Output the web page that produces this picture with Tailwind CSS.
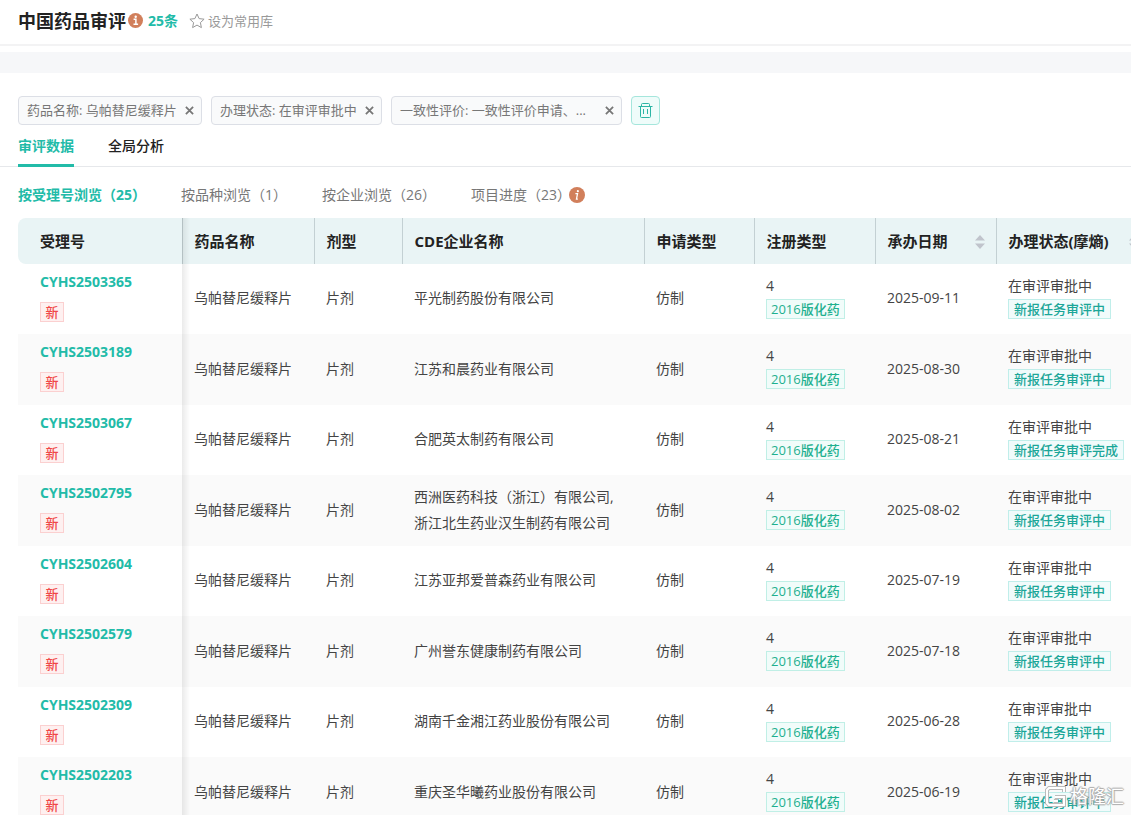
<!DOCTYPE html>
<html lang="zh-CN">
<head>
    <meta charset="UTF-8">
    <meta name="viewport" content="width=device-width, initial-scale=1.0">
    <title>中国药品审评</title>
    <script src="https://cdn.jsdelivr.net/npm/@tailwindcss/browser@4"></script>
</head>
<body class="h-screen overflow-hidden bg-white font-['Open_Sans','Noto_Sans_CJK_SC',sans-serif] text-sm text-[#444]">

    <!-- 页头 -->
    <header class="flex h-[46px] items-center border-b-2 border-[#f3f3f4] px-[18px] pb-0.5">
        <h1 class="text-lg font-bold text-[#222]">中国药品审评</h1>
        <svg class="mb-0.5 ml-0.5 size-[15px]" viewBox="0 0 15 15">
            <circle cx="7.5" cy="7.5" r="7.5" fill="#d17f5b"/>
            <path d="M5.6 6.3h2.300v5M5.500 11.300h4.600" fill="none" stroke="#fff" stroke-width="1.5"/>
            <circle cx="7.700" cy="3.700" r="1.200" fill="#fff"/>
        </svg>
        <span class="ml-[5px] text-sm font-bold text-[#22bba8]">25条</span>
        <button class="ml-[11px] flex items-center gap-[3px] text-[13px] text-[#999]">
            <svg class="size-4" viewBox="0 0 16 16" fill="none" stroke="#999" stroke-linejoin="round">
                <path d="M8 1l2.1 4.6 5 .6-3.7 3.4 1 5L8 12.100l-4.400 2.500 1-5L.9 6.200l5-.6z"/>
            </svg>
            设为常用库
        </button>
    </header>
    <div class="mt-1.5 h-[21px] bg-[#f6f7f9]"></div>

    <!-- 筛选条件 -->
    <div class="mt-[23px] flex gap-[9px] px-[18px] text-[13px] text-[#777]">
        <div class="flex h-[29px] w-[184px] items-center justify-between rounded border border-[#dcdfe6] bg-[#f9fafb] pr-[7px] pl-2 whitespace-nowrap">
            <span>药品名称: 乌帕替尼缓释片</span>
            <button aria-label="移除药品名称"><svg class="size-[9px]" viewBox="0 0 10 10" stroke="#777" stroke-width="2"><path d="M1 1l8 8M9 1l-8 8"/></svg></button>
        </div>
        <div class="flex h-[29px] w-[171px] items-center justify-between rounded border border-[#dcdfe6] bg-[#f9fafb] pr-[7px] pl-2 whitespace-nowrap">
            <span>办理状态: 在审评审批中</span>
            <button aria-label="移除办理状态"><svg class="size-[9px]" viewBox="0 0 10 10" stroke="#777" stroke-width="2"><path d="M1 1l8 8M9 1l-8 8"/></svg></button>
        </div>
        <div class="flex h-[29px] w-[231px] items-center justify-between rounded border border-[#dcdfe6] bg-[#f9fafb] pr-[7px] pl-2 whitespace-nowrap">
            <span>一致性评价: 一致性评价申请、...</span>
            <button aria-label="移除一致性评价"><svg class="size-[9px]" viewBox="0 0 10 10" stroke="#777" stroke-width="2"><path d="M1 1l8 8M9 1l-8 8"/></svg></button>
        </div>
        <button aria-label="清空" class="flex size-[29px] items-center justify-center rounded border border-[#a5e6dc] bg-[#effcfa]">
            <svg class="size-[15px]" viewBox="0 0 15 15" fill="none" stroke="#2cb5a5">
                <path d="M.5 3.500h14M3.500 3.500v-2q0-1 1-1h6q1 0 1 1v2M2.500 3.500v10q0 1 1 1h8q1 0 1-1v-10M5.500 6v5M9.500 6v5"/>
            </svg>
        </button>
    </div>

    <!-- 一级标签 -->
    <nav class="flex h-[42px] gap-[34px] border-b border-[#e6e8eb] px-[18px] leading-[42px] text-[#222]">
        <a href="#" class="h-[42px] border-b-3 border-[#22bba8] font-bold text-[#22bba8]">审评数据</a>
        <a href="#" class="font-medium">全局分析</a>
    </nav>

    <!-- 二级标签 -->
    <nav class="flex h-[51px] items-center gap-[35px] px-[18px] pt-1 text-[#777] whitespace-nowrap">
        <a href="#" class="font-bold text-[#22bba8]">按受理号浏览（25）</a>
        <a href="#">按品种浏览（1）</a>
        <a href="#">按企业浏览（26）</a>
        <a href="#" class="flex items-center">项目进度（23）
            <svg class="-ml-0.5 size-4" viewBox="0 0 15 15">
                <circle cx="7.5" cy="7.5" r="7.5" fill="#d17f5b"/>
                <path d="M6 6.300h2l-1 5h1.300" fill="none" stroke="#fff" stroke-width="1.200"/>
                <circle cx="8.300" cy="3.900" r="1" fill="#fff"/>
            </svg>
        </a>
    </nav>

    <!-- 数据表格 -->
    <div class="relative overflow-hidden pl-[18px]">
        <table class="w-[1140px] table-fixed text-left">
            <colgroup>
                <col class="w-[164px]"><col class="w-[132px]"><col class="w-[88px]"><col class="w-[242px]">
                <col class="w-[110px]"><col class="w-[121px]"><col class="w-[121px]"><col>
            </colgroup>
            <thead class="bg-[#e9f4f5] text-[15px] whitespace-nowrap text-[#222]">
                <tr class="h-[46px]">
                    <th class="rounded-l-lg pt-0.5 pl-[22px]">受理号</th>
                    <th class="border-l border-[#c3d0d3] pt-0.5 pl-3">药品名称</th>
                    <th class="border-l border-[#c3d0d3] pt-0.5 pl-3">剂型</th>
                    <th class="border-l border-[#c3d0d3] pt-0.5 pl-3">CDE企业名称</th>
                    <th class="border-l border-[#c3d0d3] pt-0.5 pl-3">申请类型</th>
                    <th class="border-l border-[#c3d0d3] pt-0.5 pl-3">注册类型</th>
                    <th class="border-l border-[#c3d0d3] pt-0.5 pl-3">
                        <div class="flex items-center justify-between pr-[11px]">承办日期
                            <svg class="h-4 w-2.5" viewBox="0 0 10 16" fill="#c0c4cc"><path d="M5 1l5 5.500H0zM5 15l5-5.500H0z"/></svg>
                        </div>
                    </th>
                    <th class="border-l border-[#c3d0d3] pt-0.5 pl-3">
                        <div class="flex items-center justify-between pr-[19px]">办理状态(摩熵)
                            <svg class="h-4 w-2.5" viewBox="0 0 10 16" fill="#c0c4cc"><path d="M5 1l5 5.500H0zM5 15l5-5.500H0z"/></svg>
                        </div>
                    </th>
                </tr>
            </thead>
            <tbody id="rows" class="leading-[26px]"></tbody>
        </table>
        <!-- 固定列阴影 -->
        <div class="pointer-events-none absolute inset-y-0 left-[182px] w-2 bg-linear-to-r from-black/8 to-transparent"></div>
    </div>

    <!-- 水印 -->
    <div class="pointer-events-none absolute right-[7px] bottom-[7px] flex items-center gap-[3px] text-lg leading-6 text-white [text-shadow:1px_0_1px_#aaa,-1px_0_1px_#aaa,0_1px_1px_#aaa,0_-1px_1px_#aaa]">
        <svg class="size-[23px]" viewBox="0 0 23 23" fill="none">
            <path d="M20 7V3H5L3 5v13l2 2h15v-8h-9M14 16h-4" stroke="#bbb" stroke-width="4"/>
            <path d="M20 7V3H5L3 5v13l2 2h15v-8h-9M14 16h-4" stroke="#fff" stroke-width="2"/>
        </svg>
        格隆汇
    </div>

    <template id="row-template">
        <tr class="odd:h-[70px] even:h-[71px] even:bg-[#fafafa]">
            <td class="pt-1.5 pl-[22px] align-top">
                <a href="#" data-field="code" class="block leading-6 font-bold text-[#22bba8]"></a>
                <span class="mt-2 block h-5 w-6 border border-[#fbd0d0] bg-[#fef0f0] text-center text-[13px] leading-[18px] font-medium text-[#f04747]">新</span>
            </td>
            <td class="pb-0.5 pl-3">乌帕替尼缓释片</td>
            <td class="pb-0.5 pl-3">片剂</td>
            <td data-field="company" class="pb-0.5 pl-3 whitespace-pre-line"></td>
            <td class="pb-0.5 pl-3">仿制</td>
            <td class="pt-[9px] pl-3 align-top">
                <div>4</div>
                <span class="block h-5 w-fit border border-[#c0efe6] bg-[#f1fcfa] px-1 text-[13px] leading-[18px] font-medium text-[#1fb08f]">2016版化药</span>
            </td>
            <td data-field="date" class="pb-0.5 pl-3"></td>
            <td class="pt-[9px] pl-3 align-top whitespace-nowrap">
                <div>在审评审批中</div>
                <span data-field="status" class="block h-5 w-fit border border-[#c0eeea] bg-[#f1fbfb] px-[5px] text-[13px] leading-[18px] font-medium text-[#1ba698]"></span>
            </td>
        </tr>
    </template>

    <script>
        const records = [
            { code: 'CYHS2503365', company: '平光制药股份有限公司', date: '2025-09-11', status: '新报任务审评中' },
            { code: 'CYHS2503189', company: '江苏和晨药业有限公司', date: '2025-08-30', status: '新报任务审评中' },
            { code: 'CYHS2503067', company: '合肥英太制药有限公司', date: '2025-08-21', status: '新报任务审评完成' },
            { code: 'CYHS2502795', company: '西洲医药科技（浙江）有限公司,\n浙江北生药业汉生制药有限公司', date: '2025-08-02', status: '新报任务审评中' },
            { code: 'CYHS2502604', company: '江苏亚邦爱普森药业有限公司', date: '2025-07-19', status: '新报任务审评中' },
            { code: 'CYHS2502579', company: '广州誉东健康制药有限公司', date: '2025-07-18', status: '新报任务审评中' },
            { code: 'CYHS2502309', company: '湖南千金湘江药业股份有限公司', date: '2025-06-28', status: '新报任务审评中' },
            { code: 'CYHS2502203', company: '重庆圣华曦药业股份有限公司', date: '2025-06-19', status: '新报任务审评中' }
        ];

        const tbody = document.getElementById('rows');
        const template = document.getElementById('row-template');

        // 逐行填充表格
        records.forEach(record => {
            const row = template.content.cloneNode(true);
            row.querySelectorAll('[data-field]').forEach(el => {
                el.textContent = record[el.dataset.field];
            });
            tbody.appendChild(row);
        });
    </script>

</body>
</html>
